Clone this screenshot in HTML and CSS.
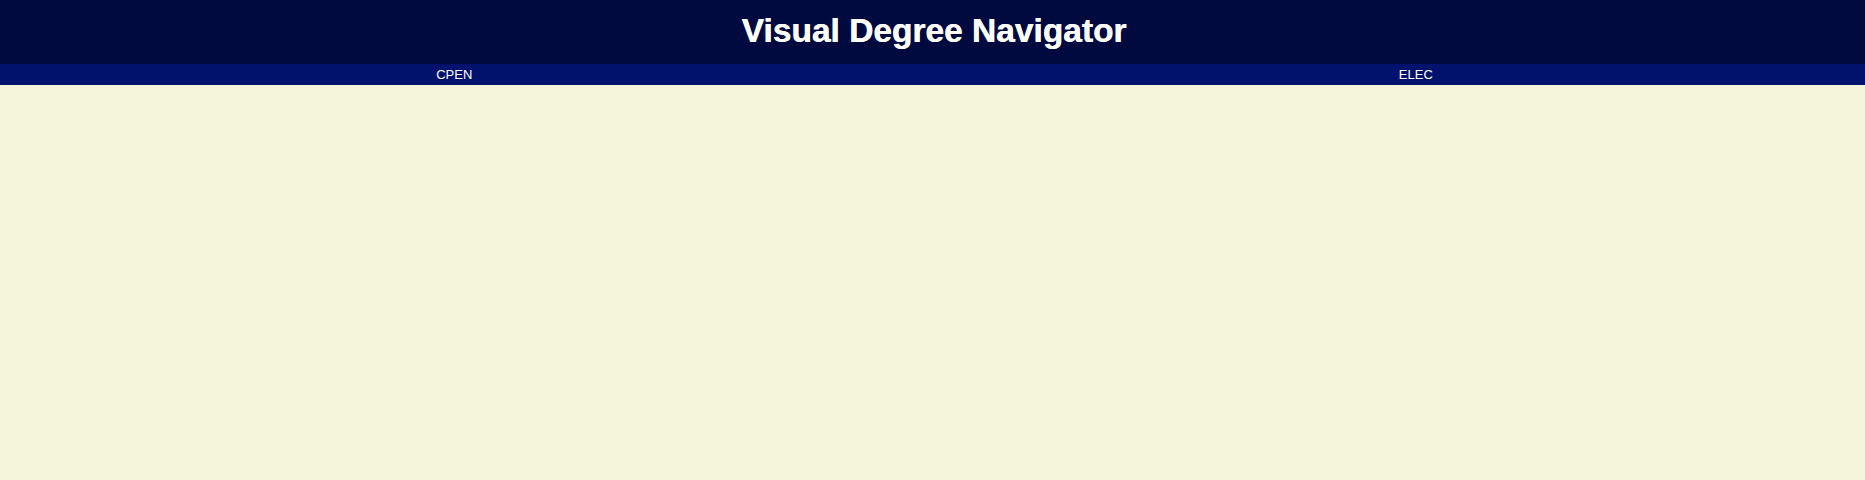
FILE: index.html
```html
<!DOCTYPE html>
<html lang="en">
<head>
<meta charset="utf-8">
<title>Visual Degree Navigator</title>
<link rel="stylesheet" href="styles.css">
</head>
<body>
<header class="site-header">
  <h1 class="site-title">Visual Degree Navigator</h1>
</header>
<nav class="program-nav">
  <a class="program-link" href="#cpen">CPEN</a>
  <a class="program-link" href="#elec">ELEC</a>
</nav>
<main class="content"></main>
</body>
</html>
```

FILE: styles.css
```css
html, body {
  margin: 0;
  padding: 0;
  height: 100%;
}

body {
  background: #f5f5dc;
  font-family: "Liberation Sans", Arial, sans-serif;
}

.site-header {
  box-sizing: border-box;
  height: 64px;
  padding-top: 12px;
  padding-left: 3px;
  background: #000a3f;
  text-align: center;
}

.site-title {
  margin: 0;
  color: #ffffff;
  font-size: 33.5px;
  font-weight: bold;
  line-height: normal;
  text-shadow: 0.4px 0 0 #ffffff;
}

.program-nav {
  box-sizing: border-box;
  height: 21px;
  display: flex;
  justify-content: center;
  align-items: center;
  gap: 926.5px;
  padding-left: 4px;
  background: #00126c;
}

.program-link {
  color: #ffffff;
  font-size: 13px;
  text-decoration: none;
  line-height: 21px;
}
```
